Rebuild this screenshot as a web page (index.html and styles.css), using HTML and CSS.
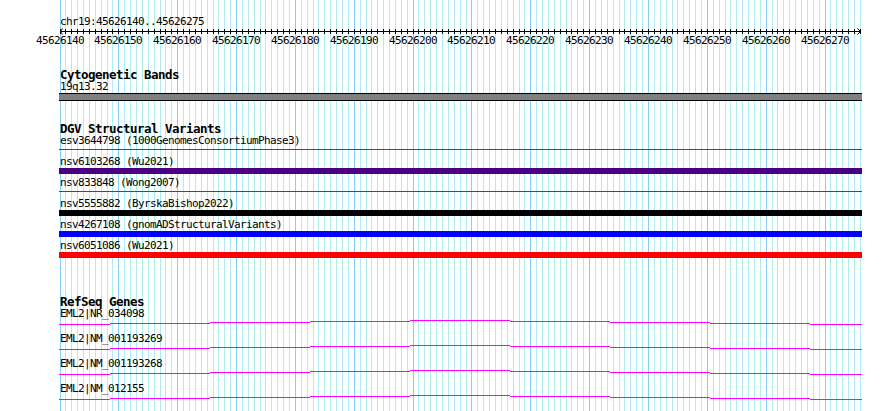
FILE: index.html
```html
<!DOCTYPE html>
<html lang="en">
<head>
    <meta charset="UTF-8">
    <meta name="viewport" content="width=device-width, initial-scale=1.0">
    <link rel="stylesheet" href="styles.css">
    <title>chr19:45626140..45626275</title>
</head>
<body>
    <div class="browser">
        <svg class="grid" id="grid" width="890" height="411" shape-rendering="crispEdges"></svg>

        <div class="tracks">
            <div class="locus">chr19:45626140..45626275</div>
            <svg class="ruler" id="ruler" width="803" height="7" viewBox="59 28 803 7"></svg>
            <div class="ruler-labels" id="rulerLabels"></div>

            <section class="track cyto">
                <h2>Cytogenetic Bands</h2>
                <div class="label">19q13.32</div>
                <div class="band"></div>
            </section>

            <section class="track dgv">
                <h2>DGV Structural Variants</h2>
                <div class="feature">
                    <div class="label">esv3644798 (1000GenomesConsortiumPhase3)</div>
                    <div class="bar thin"></div>
                </div>
                <div class="feature">
                    <div class="label">nsv6103268 (Wu2021)</div>
                    <div class="bar purple"></div>
                </div>
                <div class="feature">
                    <div class="label">nsv833848 (Wong2007)</div>
                    <div class="bar thin"></div>
                </div>
                <div class="feature">
                    <div class="label">nsv5555882 (ByrskaBishop2022)</div>
                    <div class="bar black"></div>
                </div>
                <div class="feature">
                    <div class="label">nsv4267108 (gnomADStructuralVariants)</div>
                    <div class="bar blue"></div>
                </div>
                <div class="feature">
                    <div class="label">nsv6051086 (Wu2021)</div>
                    <div class="bar red"></div>
                </div>
            </section>

            <section class="track genes">
                <h2>RefSeq Genes</h2>
                <div class="gene">
                    <div class="label">EML2|NR_034098</div>
                    <svg class="intron" width="803" height="5" viewBox="59 0 803 5"><use href="#hat"/></svg>
                </div>
                <div class="gene">
                    <div class="label">EML2|NM_001193269</div>
                    <svg class="intron" width="803" height="5" viewBox="59 0 803 5"><use href="#hat"/></svg>
                </div>
                <div class="gene">
                    <div class="label">EML2|NM_001193268</div>
                    <svg class="intron" width="803" height="5" viewBox="59 0 803 5"><use href="#hat"/></svg>
                </div>
                <div class="gene">
                    <div class="label">EML2|NM_012155</div>
                    <svg class="intron" width="803" height="5" viewBox="59 0 803 5"><use href="#hat"/></svg>
                </div>
            </section>
        </div>
    </div>

    <!-- intron line, one pixel step every 100px -->
    <svg class="defs" width="0" height="0">
        <defs>
            <path id="hat" fill="#ff00ff" d="M59 4h51v1h-51z M110 3h100v1h-100z M210 2h100v1h-100z M310 1h100v1h-100z M410 0h100v1h-100z M510 1h100v1h-100z M610 2h100v1h-100z M710 3h100v1h-100z M810 4h52v1h-52z"/>
        </defs>
    </svg>

    <script src="script.js"></script>
</body>
</html>
```

FILE: styles.css
```css
body {
    margin: 0;
    font-family: "DejaVu Sans Mono", "Liberation Mono", monospace;
    font-size: 11px;
    letter-spacing: -0.62px;
    line-height: 11px;
    color: #000;
    background: #fff;
}

.browser {
    position: relative;
    width: 890px;
    height: 411px;
    overflow: hidden;
}

.grid {
    position: absolute;
    left: 0;
    top: 0;
}

.defs {
    position: absolute;
}

.tracks {
    position: relative;
    width: 803px;
    margin-left: 59px;
    padding-top: 16px;
}

.locus {
    height: 11px;
    padding-left: 1px;
}

.ruler {
    display: block;
    margin-top: 1px;
}

.ruler-labels {
    position: relative;
    height: 11px;
}

.ruler-labels span {
    position: absolute;
    top: 0;
    width: 48px;
    text-align: center;
}

.track h2 {
    margin: 0;
    padding-left: 1px;
    font-size: 12.5px;
    letter-spacing: -0.53px;
    line-height: 12px;
    font-weight: bold;
}

.label {
    height: 11px;
    padding-left: 1px;
    white-space: nowrap;
}

.cyto {
    margin-top: 23px;
}

.band {
    height: 6px;
    margin-top: 1px;
    background: #808080;
    border-top: 1px solid #000;
    border-bottom: 1px solid #000;
}

.dgv {
    margin-top: 22px;
}

.feature {
    height: 21px;
}

.bar {
    height: 6px;
    margin-top: 1px;
}

.bar.thin {
    height: 1px;
    margin-top: 3px;
    background: #ff0000;
}

.purple { background: #4b0082; }
.black { background: #000; }
.blue { background: #0000ff; }
.red { background: #ff0000; }

.genes {
    margin-top: 35px;
}

.gene {
    height: 25px;
}

.intron {
    display: block;
    margin-top: 1px;
}
```

FILE: script.js
```js
const startPos = 45626140;
const bases = 136;
const firstCol = 60;
const bpWidth = 5.885;
const svgNS = "http://www.w3.org/2000/svg";

function col(i) {
    return Math.floor(firstCol + i * bpWidth);
}

function rect(parent, x, y, w, h, fill) {
    const r = document.createElementNS(svgNS, "rect");
    r.setAttribute("x", x);
    r.setAttribute("y", y);
    r.setAttribute("width", w);
    r.setAttribute("height", h);
    r.setAttribute("fill", fill);
    parent.appendChild(r);
}

function drawGrid() {
    const grid = document.getElementById("grid");
    for (let i = 0; i <= bases; i++) {
        rect(grid, col(i), 0, 1, 411, i % 10 === 0 ? "#87cefa" : "#afeeee");
    }
}

function drawRuler() {
    const ruler = document.getElementById("ruler");
    ruler.setAttribute("shape-rendering", "crispEdges");
    rect(ruler, firstCol, 31, col(bases) - firstCol + 1, 1, "#000");
    for (let i = 0; i <= bases; i++) {
        rect(ruler, col(i), 29, 1, 5, "#000");
    }

    // arrow heads at both ends
    const arrows = ["62.5,28.5 60.5,31.5 62.5,34.5", "857.5,28.5 860.5,31.5 857.5,34.5"];
    arrows.forEach(function (points) {
        const p = document.createElementNS(svgNS, "polyline");
        p.setAttribute("points", points);
        p.setAttribute("fill", "none");
        p.setAttribute("stroke", "#000");
        p.setAttribute("shape-rendering", "auto");
        ruler.appendChild(p);
    });

    const labels = document.getElementById("rulerLabels");
    for (let i = 0; i <= bases; i += 10) {
        const span = document.createElement("span");
        span.textContent = startPos + i;
        span.style.left = (col(i) - 59 - 24) + "px";
        labels.appendChild(span);
    }
}

drawGrid();
drawRuler();
```
